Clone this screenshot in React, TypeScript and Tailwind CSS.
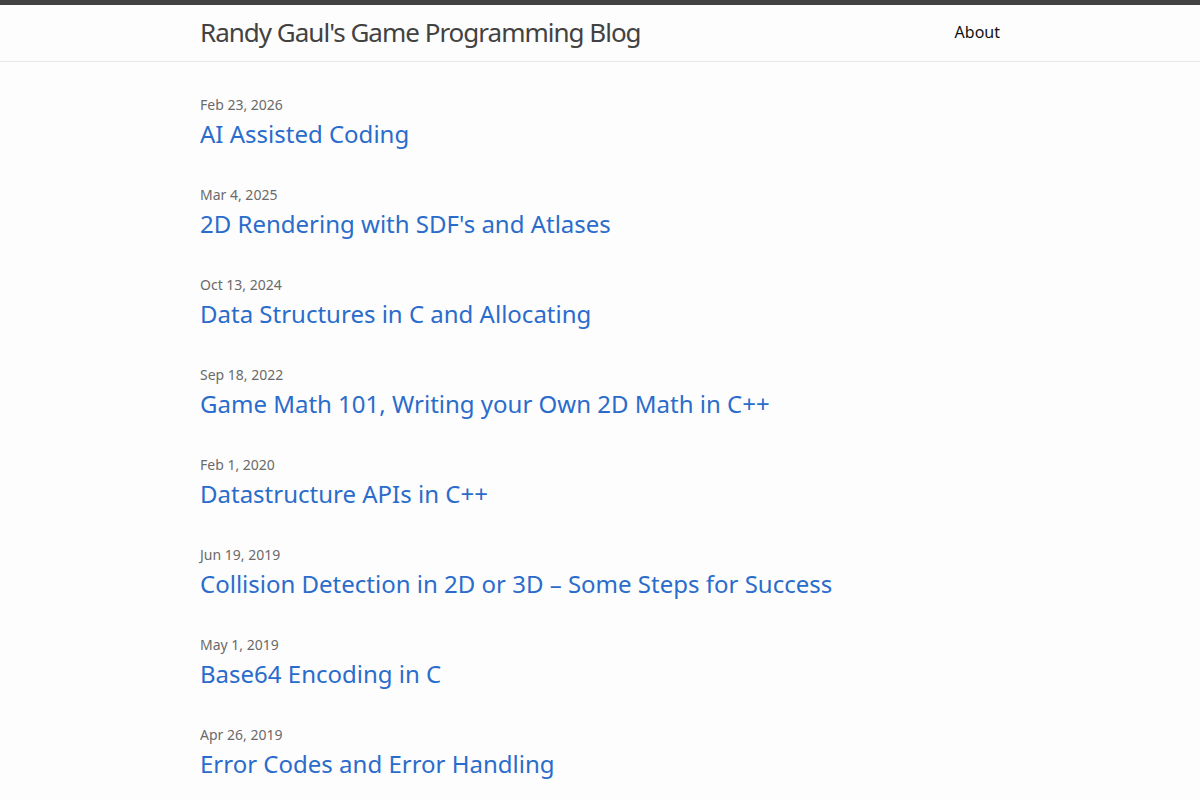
import React from "react";

type Post = {
  date: string;
  title: string;
};

const posts: Post[] = [
  { date: "Feb 23, 2026", title: "AI Assisted Coding" },
  { date: "Mar 4, 2025", title: "2D Rendering with SDF's and Atlases" },
  { date: "Oct 13, 2024", title: "Data Structures in C and Allocating" },
  { date: "Sep 18, 2022", title: "Game Math 101, Writing your Own 2D Math in C++" },
  { date: "Feb 1, 2020", title: "Datastructure APIs in C++" },
  { date: "Jun 19, 2019", title: "Collision Detection in 2D or 3D – Some Steps for Success" },
  { date: "May 1, 2019", title: "Base64 Encoding in C" },
  { date: "Apr 26, 2019", title: "Error Codes and Error Handling" },
];

const App = () => {
  return (
    <div className="min-h-screen bg-[#fdfdfd] font-['Noto_Sans',sans-serif] text-[#111]">
      {/* サイトヘッダー */}
      <header className="border-t-[5px] border-b border-t-[#424242] border-b-[#e8e8e8]">
        <div className="mx-auto flex h-14 max-w-[800px] items-center justify-between pb-[2px]">
          <a href="#" className="text-[26px] leading-[54px] tracking-[-1px] text-[#424242]">
            Randy Gaul's Game Programming Blog
          </a>
          <nav>
            <a href="#" className="text-base leading-[54px] text-[#111]">
              About
            </a>
          </nav>
        </div>
      </header>

      {/* 記事一覧 */}
      <main className="mx-auto max-w-[800px] pt-[30px]">
        <ul>
          {posts.map((post) => (
            <li key={post.title} className="mb-[30px]">
              <div className="pt-px text-sm leading-[23px] text-[#6a6a6a]">{post.date}</div>
              <h3>
                <a href="#" className="block text-2xl leading-9 text-[#2a6ccb]">
                  {post.title}
                </a>
              </h3>
            </li>
          ))}
        </ul>
      </main>
    </div>
  );
};

export default App;
